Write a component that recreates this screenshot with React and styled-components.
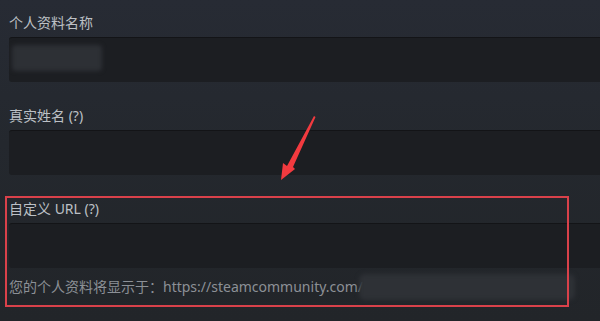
import React from 'react'
import styled, { createGlobalStyle } from 'styled-components'

const GlobalStyle = createGlobalStyle`
  html, body {
    margin: 0;
    padding: 0;
    overflow: hidden;
  }
  body {
    background: linear-gradient(180deg, #272b34 0%, #24282e 45%, #222529 100%);
    font-family: "Noto Sans", "Noto Sans CJK SC", sans-serif;
  }
`

function App() {
  return (
    <>
      <GlobalStyle />
      <Page>
        <Field>
          <Label>个人资料名称</Label>
          <Input>
            <Censor $width={90} $left={3} />
          </Input>
        </Field>

        <Field>
          <Label>真实姓名 (?)</Label>
          <Input />
        </Field>

        <Highlighted>
          <Label>自定义 URL (?)</Label>
          <Input />
          <Hint>
            您的个人资料将显示于：https://steamcommunity.com/
            <HintCensor />
          </Hint>
        </Highlighted>

        <Arrow viewBox="0 0 40 70" width="40" height="70">
          <path d="M35 2 L36.5 3 L14 53 L16 55 L2 66 L4 49 L8 52 Z" fill="#f23a3f" />
        </Arrow>
      </Page>
    </>
  )
}

export default App

const Page = styled.div`
  position: relative;
  width: 100%;
  height: 321px;
  padding: 13px 0 0 9px;
  box-sizing: border-box;
  display: flex;
  flex-direction: column;
  gap: 24px;
`

const Field = styled.div`
  display: flex;
  flex-direction: column;
  gap: 4px;
`

// the red annotation frame drawn over the custom URL field
const Highlighted = styled(Field)`
  position: relative;
  &::after {
    content: '';
    position: absolute;
    left: -4px;
    top: -3px;
    width: 564px;
    height: 111px;
    border: 2px solid #d9414a;
    box-sizing: border-box;
    pointer-events: none;
  }
`

const Label = styled.div`
  font-size: 14px;
  line-height: 20px;
  color: #bcc0c5;
  font-family: "Noto Sans", "Noto Sans CJK SC", sans-serif;
`

const Input = styled.div`
  position: relative;
  height: 45px;
  background: #1c1e22;
  border-top: 1px solid #131417;
  border-radius: 3px 0 0 3px;
  box-sizing: border-box;
`

const Censor = styled.div`
  position: absolute;
  left: ${p => p.$left}px;
  top: 7px;
  width: ${p => p.$width}px;
  height: 26px;
  background: #2d3035;
  border-radius: 4px;
  filter: blur(2px);
`

const Hint = styled.div`
  position: relative;
  font-size: 14px;
  line-height: 20px;
  margin-top: 5px;
  color: #8c9096;
  font-family: "Noto Sans", "Noto Sans CJK SC", sans-serif;
`

const HintCensor = styled.span`
  position: absolute;
  left: 350px;
  top: -3px;
  width: 216px;
  height: 26px;
  background: #2e3136;
  border-radius: 6px;
  filter: blur(2px);
`

const Arrow = styled.svg`
  position: absolute;
  left: 279px;
  top: 114px;
`
